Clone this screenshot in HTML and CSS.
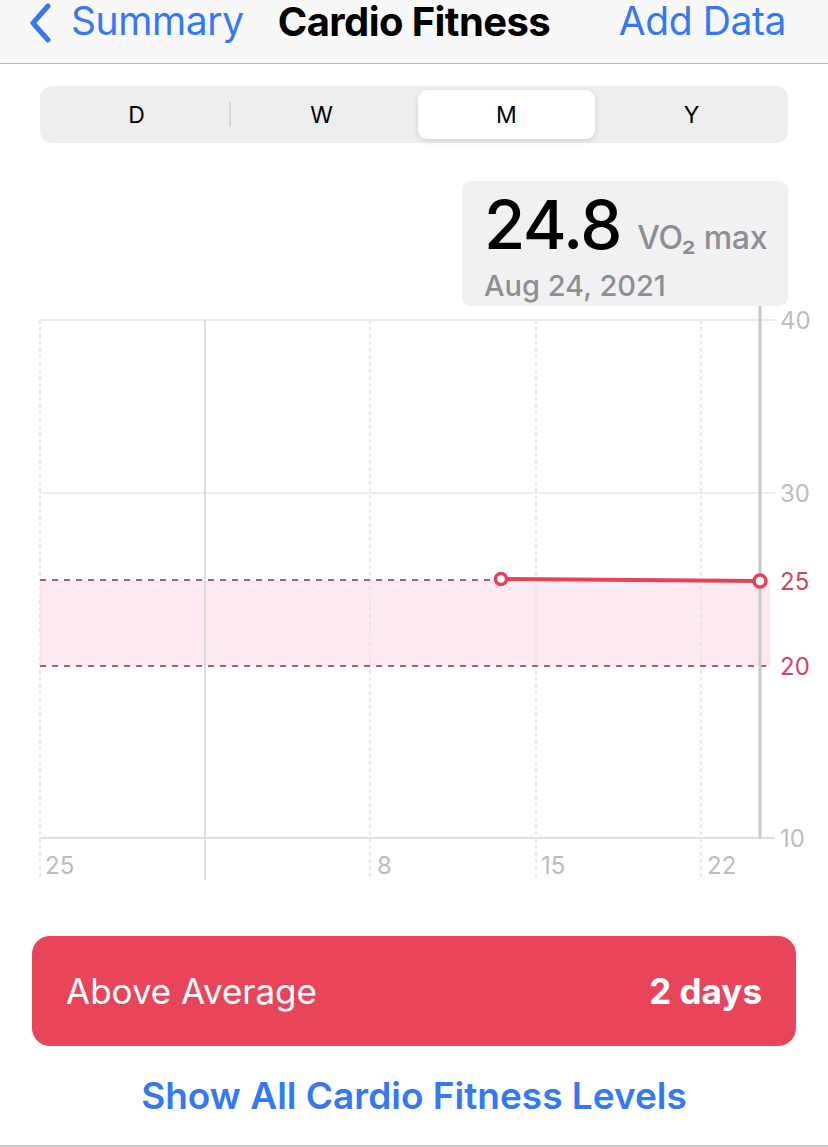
FILE: index.html
```html
<!DOCTYPE html>
<html lang="en">
<head>
	<meta charset="UTF-8">
	<meta name="viewport" content="width=device-width, initial-scale=1.0">
	<title>Cardio Fitness</title>
	<link rel="stylesheet" href="styles.css">
</head>
<body>
	<header class="nav">
		<a class="nav-back">
			<svg class="chevron" viewBox="0 0 24 40" width="24" height="40">
				<path d="M20 3 L5 20 L20 37" fill="none" stroke="currentColor" stroke-width="5" stroke-linecap="round" stroke-linejoin="round"/>
			</svg>
			<span>Summary</span>
		</a>
		<h1 class="nav-title">Cardio Fitness</h1>
		<a class="nav-action">Add Data</a>
	</header>

	<main>
		<div class="segments">
			<span class="segment">D</span>
			<span class="segment divided">W</span>
			<span class="segment selected">M</span>
			<span class="segment">Y</span>
		</div>

		<div class="readout">
			<div class="readout-value">24.8 <span class="readout-unit">VO₂ max</span></div>
			<div class="readout-date">Aug 24, 2021</div>
		</div>

		<svg class="chart" viewBox="0 0 828 600" width="828" height="600">
			<!-- above average band -->
			<rect x="40" y="274" width="730" height="86" fill="#fdeaf0"/>

			<!-- horizontal grid -->
			<line x1="40" y1="14" x2="775" y2="14" stroke="#ececec" stroke-width="2"/>
			<line x1="40" y1="187" x2="775" y2="187" stroke="#ececec" stroke-width="2"/>
			<line x1="40" y1="532" x2="775" y2="532" stroke="#dedede" stroke-width="2"/>

			<!-- vertical grid -->
			<g stroke="#e2e2e2" stroke-width="1.5" stroke-dasharray="4 3">
				<line x1="40" y1="14" x2="40" y2="574"/>
				<line x1="370" y1="14" x2="370" y2="574"/>
				<line x1="536" y1="14" x2="536" y2="574"/>
				<line x1="701" y1="14" x2="701" y2="574"/>
			</g>
			<line x1="205" y1="14" x2="205" y2="574" stroke="#dcdcdc" stroke-width="2"/>

			<!-- band edges -->
			<g stroke="#b8587a" stroke-width="2" stroke-dasharray="6 6">
				<line x1="40" y1="274" x2="770" y2="274"/>
				<line x1="40" y1="360" x2="770" y2="360"/>
			</g>

			<!-- selection -->
			<line x1="760" y1="0" x2="760" y2="532" stroke="#c8c8c8" stroke-width="3"/>

			<!-- data -->
			<line x1="501" y1="273" x2="760" y2="275" stroke="#e5435b" stroke-width="4"/>
			<circle cx="501" cy="273" r="5.5" fill="#fff" stroke="#e5435b" stroke-width="3.5"/>
			<circle cx="760" cy="275" r="6" fill="#fff" stroke="#e5435b" stroke-width="3.5"/>

			<!-- axis labels -->
			<g class="axis">
				<text x="780" y="23">40</text>
				<text x="780" y="196">30</text>
				<text x="780" y="284" class="hot">25</text>
				<text x="780" y="369" class="hot">20</text>
				<text x="780" y="541">10</text>
				<text x="45" y="568">25</text>
				<text x="377" y="568">8</text>
				<text x="541" y="568">15</text>
				<text x="707" y="568">22</text>
			</g>
		</svg>

		<div class="level">
			<span>Above Average</span>
			<strong>2 days</strong>
		</div>

		<a class="levels-link">Show All Cardio Fitness Levels</a>
	</main>
</body>
</html>
```

FILE: styles.css
```css
body {
	margin       : 0;
	width        : 828px;
	height       : 1147px;
	overflow     : hidden;
	font-family  : Inter, 'Noto Sans', sans-serif;
	background   : #fff;
	color        : #000;
	box-sizing   : border-box;
	border-bottom: 2px solid #c9c9c9;
}

a { color: #3478f6; text-decoration: none; }

.nav {
	height          : 64px;
	box-sizing      : border-box;
	display         : flex;
	align-items     : flex-start;
	padding         : 0 42px 0 28px;
	background-color: #f8f8f9;
	border-bottom   : 1px solid #b8b8b8;
}

.nav-back {
	display       : flex;
	align-items   : center;
	gap           : 19px;
	margin-top    : -3px;
	font-size     : 39px;
	letter-spacing: -0.4px;
}

.chevron { margin-top: 5px; }

.nav-title {
	margin        : -3px 0 0 34px;
	font-size     : 40px;
	font-weight   : 700;
	letter-spacing: -0.6px;
}

.nav-action {
	margin-left   : auto;
	margin-top    : -3px;
	font-size     : 39px;
	letter-spacing: -0.4px;
}

.segments {
	display              : grid;
	grid-template-columns: repeat(4, 1fr);
	height               : 57px;
	margin               : 22px 40px 0;
	padding              : 4px;
	box-sizing           : border-box;
	border-radius        : 12px;
	background-color     : #eeeeef;
}

.segment {
	display        : flex;
	align-items    : center;
	justify-content: center;
	font-size      : 23px;
	font-weight    : 400;
	border-radius  : 9px;
	position       : relative;
}

.segment.divided::before {
	content         : '';
	position        : absolute;
	left            : 0;
	top             : 12px;
	bottom          : 12px;
	width           : 2px;
	background-color: #d6d6d8;
}

.segment.selected {
	margin          : 0 4px;
	background-color: #fff;
	box-shadow      : 0 2px 6px rgba(0, 0, 0, 0.12);
}

.readout {
	width           : 326px;
	height          : 125px;
	box-sizing      : border-box;
	margin          : 38px 40px 0 auto;
	padding         : 10px 0 0 22px;
	border-radius   : 9px;
	background-color: #f1f1f3;
}

.readout-value {
	font-size     : 67px;
	font-weight   : 500;
	line-height   : 68px;
	letter-spacing: -1.5px;
}

.readout-unit {
	font-size     : 32px;
	letter-spacing: -0.3px;
	color         : #8e8e93;
}

.readout-date {
	margin-top : -4px;
	font-size  : 29px;
	font-weight: 500;
	color      : #8e8e93;
}

.chart { display: block; }

.axis text {
	font-size: 24px;
	fill     : #bdbdbd;
}

.axis text.hot { fill: #d8445e; }

.level {
	display         : flex;
	align-items     : center;
	justify-content : space-between;
	height          : 110px;
	margin          : 30px 32px 0;
	padding         : 0 34px;
	border-radius   : 18px;
	background-color: #e8455b;
	color           : #fff;
	font-size       : 35px;
}

.level strong { font-weight: 700; }

.levels-link {
	display    : block;
	margin-top : 27px;
	text-align : center;
	font-size  : 37px;
	font-weight: 600;
}
```
